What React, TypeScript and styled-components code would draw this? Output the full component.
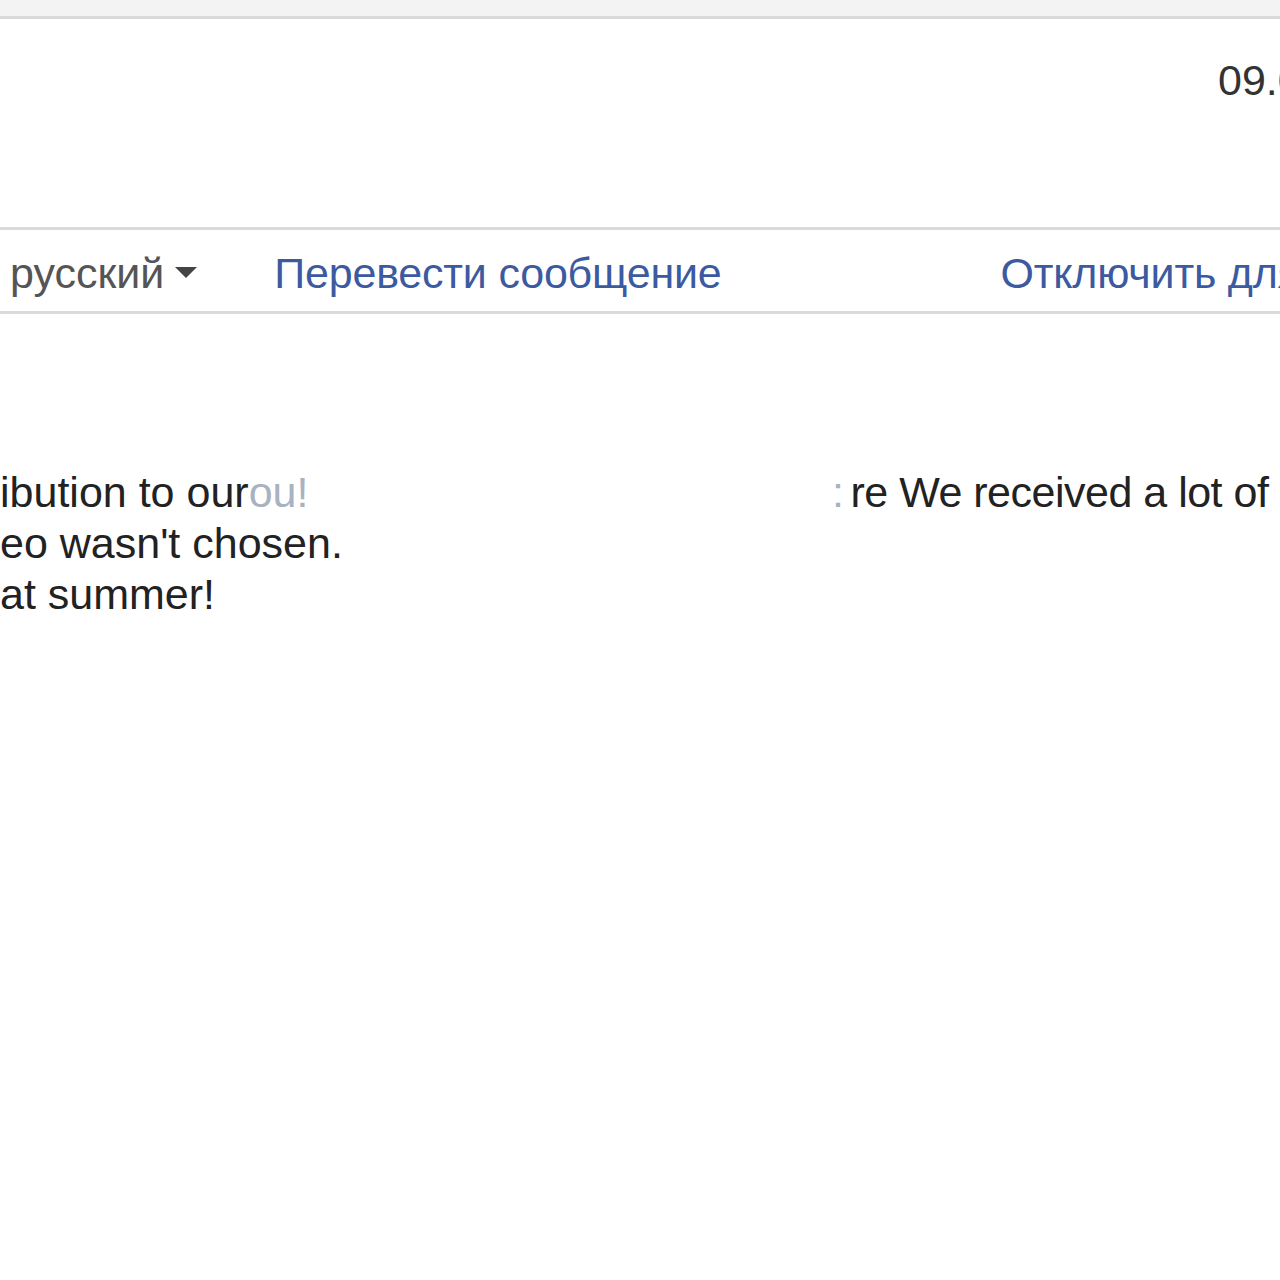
import { createGlobalStyle, styled } from "styled-components";

const GlobalStyle = createGlobalStyle`
  html, body {
    margin: 0;
    padding: 0;
    background: #ffffff;
  }
  body {
    font-family: "Liberation Sans", Arial, sans-serif;
  }
`;

function App() {
  return (
    <Page>
      <GlobalStyle />
      <TopStrip />
      <Header>
        <DateText>09.02.2012</DateText>
      </Header>
      <TranslateBar>
        <LangSelect>
          русский
          <Caret />
        </LangSelect>
        <BarLink $offset={77}>Перевести сообщение</BarLink>
        <BarLink $offset={279}>Отключить для: английский</BarLink>
      </TranslateBar>
      <Body>
        <FirstLine>
          <span>
            ibution to our<Faded>ou!</Faded>
          </span>
          <RightPart>
            <Faded $gap={7}>:</Faded>re We received a lot of great videos
          </RightPart>
        </FirstLine>
        <Line>eo wasn't chosen.</Line>
        <Line>at summer!</Line>
      </Body>
    </Page>
  );
}

export default App;

const Page = styled.div`
  width: 1280px;
  height: 1280px;
  overflow: hidden;
  background: #ffffff;
  color: #222222;
  font-size: 43px;
  line-height: 51px;
`;

const TopStrip = styled.div`
  height: 16px;
  background: #f3f3f3;
  border-bottom: 3px solid #d9d9d9;
`;

const Header = styled.div`
  height: 172px;
  padding: 36px 0 0 1218px;
  white-space: nowrap;
  overflow: hidden;
`;

const DateText = styled.span`
  color: #333333;
`;

const TranslateBar = styled.div`
  display: flex;
  align-items: center;
  height: 51px;
  padding: 18px 0 12px 10px;
  border-top: 3px solid #dadada;
  border-bottom: 3px solid #dadada;
  white-space: nowrap;
  overflow: hidden;
`;

const LangSelect = styled.span`
  display: flex;
  align-items: center;
  flex-shrink: 0;
  color: #555555;
`;

const Caret = styled.span`
  width: 0;
  height: 0;
  margin: 0 0 2px 11px;
  border-left: 11px solid transparent;
  border-right: 11px solid transparent;
  border-top: 11px solid #444444;
`;

const BarLink = styled.span<{ $offset: number }>`
  flex-shrink: 0;
  margin-left: ${(p) => p.$offset}px;
  color: #3c5a9f;
  letter-spacing: -0.2px;
`;

const Body = styled.div`
  margin-top: 153px;
  white-space: nowrap;
  overflow: hidden;
`;

const Line = styled.div`
  height: 51px;
`;

const FirstLine = styled(Line)`
  display: grid;
  grid-template-columns: 832px 1fr;
  overflow: hidden;
`;

const RightPart = styled.span`
  letter-spacing: -0.5px;
`;

const Faded = styled.span<{ $gap?: number }>`
  color: #a9b2c0;
  margin-right: ${(p) => p.$gap ?? 0}px;
`;
